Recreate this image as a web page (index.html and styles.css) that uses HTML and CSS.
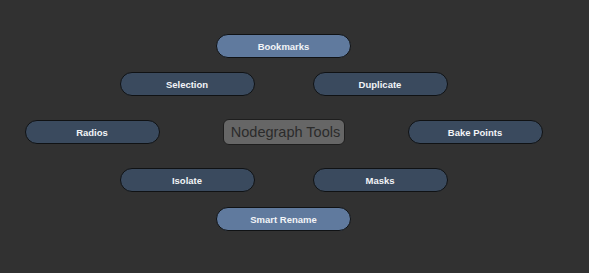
FILE: index.html
```html
<!DOCTYPE html>
<html>
    <head>
        <title>Nodegraph Tools</title>
        <meta name="viewport" content="width=device-width, initial-scale=1">
        <link rel="stylesheet" href="styles.css">
    </head>
    <body>
        <div id="pie">
            <div class="row" id="r1">
                <button class="item hot" type="button">Bookmarks</button>
            </div>
            <div class="row" id="r2">
                <button class="item" type="button">Selection</button>
                <button class="item" type="button">Duplicate</button>
            </div>
            <div class="row" id="r3">
                <button class="item" type="button">Radios</button>
                <div id="title">Nodegraph Tools</div>
                <button class="item" type="button">Bake Points</button>
            </div>
            <div class="row" id="r4">
                <button class="item" type="button">Isolate</button>
                <button class="item" type="button">Masks</button>
            </div>
            <div class="row" id="r5">
                <button class="item hot" type="button">Smart Rename</button>
            </div>
        </div>
    </body>
</html>
```

FILE: styles.css
```css
body{
    margin: 0;
    background-color: #313131;
    font-family: "Liberation Sans", Arial, sans-serif;
}
#pie{
    width: 567px;
    padding-top: 34px;
    display: flex;
    flex-direction: column;
}
.row{
    display: flex;
    justify-content: center;
    align-items: center;
}
#r2{
    margin-top: 14px;
    gap: 58px;
}
#r3{
    margin-top: 23px;
    gap: 63px;
}
#r4{
    margin-top: 23px;
    gap: 58px;
}
#r5{
    margin-top: 15px;
}
.item{
    box-sizing: border-box;
    width: 135px;
    height: 24px;
    padding: 0;
    border: 1px solid #101214;
    border-radius: 12px;
    background-color: #3a4a5e;
    color: #f2f4f7;
    font-family: "Liberation Sans", Arial, sans-serif;
    font-weight: bold;
    font-size: 9.5px;
}
.hot{
    background-color: #607a9e;
}
#title{
    box-sizing: border-box;
    width: 122px;
    height: 26px;
    padding-left: 4px;
    border: 1px solid #1e1e1e;
    border-radius: 6px;
    background-color: #666666;
    color: #2b2b2b;
    font-size: 14.5px;
    line-height: 24px;
    text-align: center;
    white-space: nowrap;
}
```
